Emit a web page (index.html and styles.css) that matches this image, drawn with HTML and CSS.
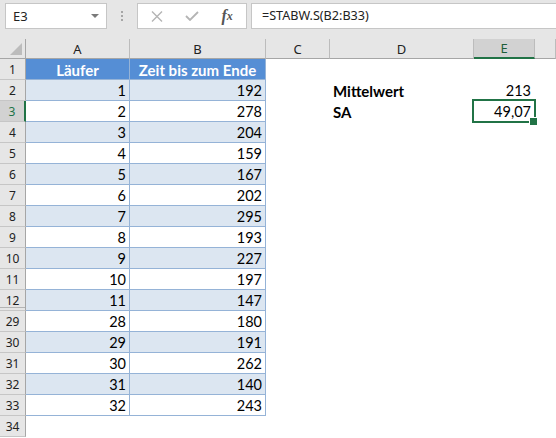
FILE: index.html
```html
<!DOCTYPE html>
<html lang="de">
<head>
<meta charset="utf-8">
<title>STABW.S</title>
<link rel="stylesheet" href="styles.css">
</head>
<body>
<div class="toolbar">
  <div class="namebox"><span class="name">E3</span><span class="caret"></span></div>
  <div class="grip"><i></i><i></i><i></i></div>
  <div class="fbuttons">
    <span class="fbtn"><svg width="12" height="11" viewBox="0 0 12 11"><path d="M1 0.5 L11 10.5 M11 0.5 L1 10.5" stroke="#b4b4b4" stroke-width="1.4" fill="none"/></svg></span>
    <span class="fbtn"><svg width="14" height="10" viewBox="0 0 14 10"><path d="M1 5 L5 9 L13 1" stroke="#b4b4b4" stroke-width="1.8" fill="none"/></svg></span>
    <span class="fbtn fx"><i>f</i><i class="x">x</i></span>
  </div>
  <div class="formula">=STABW.S(B2:B33)</div>
</div>
<div class="sheet">
  <div class="corner"><svg width="12" height="12" viewBox="0 0 12 12"><path d="M12 0 L12 12 L0 12 Z" fill="#bcbcbc"/></svg></div>
  <div class="ch">A</div><div class="ch">B</div><div class="ch">C</div><div class="ch">D</div><div class="ch sel">E</div><div class="ch"></div>

  <div class="rh">1</div><div class="t th">Läufer</div><div class="t th">Zeit bis zum Ende</div><div></div><div></div><div></div><div></div>
  <div class="rh">2</div><div class="t band">1</div><div class="t band">192</div><div></div><div class="c b">Mittelwert</div><div class="c r">213</div><div></div>
  <div class="rh rsel">3</div><div class="t">2</div><div class="t">278</div><div></div><div class="c b">SA</div><div class="c r active">49,07</div><div></div>
  <div class="rh">4</div><div class="t band">3</div><div class="t band">204</div><div></div><div></div><div></div><div></div>
  <div class="rh">5</div><div class="t">4</div><div class="t">159</div><div></div><div></div><div></div><div></div>
  <div class="rh">6</div><div class="t band">5</div><div class="t band">167</div><div></div><div></div><div></div><div></div>
  <div class="rh">7</div><div class="t">6</div><div class="t">202</div><div></div><div></div><div></div><div></div>
  <div class="rh">8</div><div class="t band">7</div><div class="t band">295</div><div></div><div></div><div></div><div></div>
  <div class="rh">9</div><div class="t">8</div><div class="t">193</div><div></div><div></div><div></div><div></div>
  <div class="rh">10</div><div class="t band">9</div><div class="t band">227</div><div></div><div></div><div></div><div></div>
  <div class="rh">11</div><div class="t">10</div><div class="t">197</div><div></div><div></div><div></div><div></div>
  <div class="rh hid">12</div><div class="t band">11</div><div class="t band">147</div><div></div><div></div><div></div><div></div>
  <div class="rh">29</div><div class="t">28</div><div class="t">180</div><div></div><div></div><div></div><div></div>
  <div class="rh">30</div><div class="t band">29</div><div class="t band">191</div><div></div><div></div><div></div><div></div>
  <div class="rh">31</div><div class="t">30</div><div class="t">262</div><div></div><div></div><div></div><div></div>
  <div class="rh">32</div><div class="t band">31</div><div class="t band">140</div><div></div><div></div><div></div><div></div>
  <div class="rh">33</div><div class="t">32</div><div class="t">243</div><div></div><div></div><div></div><div></div>
  <div class="rh">34</div><div></div><div></div><div></div><div></div><div></div><div></div>
</div>
</body>
</html>
```
FILE: styles.css
```css
* { box-sizing: border-box; }
html, body { margin: 0; padding: 0; }
body {
  width: 556px;
  height: 438px;
  overflow: hidden;
  background: #ffffff;
  font-family: Lato, "Liberation Sans", sans-serif;
  color: #000;
}

/* ---------- formula bar ---------- */
.toolbar {
  display: flex;
  align-items: flex-start;
  height: 39px;
  padding-top: 3px;
  background: #e6e6e6;
  font-family: "Noto Sans", "Open Sans", sans-serif;
}
.namebox {
  margin-left: 5px;
  width: 102px;
  height: 26px;
  background: #fff;
  border: 1px solid #c6c6c6;
  display: flex;
  align-items: center;
  justify-content: space-between;
  padding: 0 7px 0 7px;
}
.name { font-size: 13px; color: #222; }
.caret {
  width: 0; height: 0;
  border-left: 4px solid transparent;
  border-right: 4px solid transparent;
  border-top: 4px solid #7a7a7a;
}
.grip {
  width: 30px;
  height: 26px;
  display: flex;
  flex-direction: column;
  align-items: center;
  justify-content: center;
  gap: 2px;
}
.grip i { display: block; width: 2px; height: 2px; background: #a6a6a6; }
.fbuttons {
  width: 110px;
  height: 26px;
  background: #fff;
  border: 1px solid #c6c6c6;
  display: flex;
  align-items: center;
  padding-left: 1px;
}
.fbtn {
  width: 36px;
  display: flex;
  justify-content: center;
  align-items: center;
}
.fx {
  font-family: "Liberation Serif", "DejaVu Serif", serif;
  font-style: italic;
  font-size: 16px;
  color: #555;
  padding-right: 2px;
}
.fx i { font-style: italic; font-weight: bold; }
.fx .x { font-size: 12px; font-weight: bold; margin-left: 0; }
.formula {
  flex: 1;
  margin-left: 4px;
  height: 26px;
  background: #fff;
  border: 1px solid #c6c6c6;
  border-right: none;
  padding-left: 10px;
  font-size: 12.6px;
  line-height: 24px;
  color: #222;
}

/* ---------- grid ---------- */
.sheet {
  display: grid;
  grid-template-columns: 26px 104px 136px 64px 144px 61px 1fr;
  grid-template-rows: 20px;
  grid-auto-rows: 21px;
}
.corner {
  background: #e6e6e6;
  border-right: 1px solid #a6a6a6;
  border-bottom: 1px solid #a6a6a6;
  display: flex;
  align-items: flex-end;
  justify-content: flex-end;
  padding: 0 3px 3px 0;
}
.ch {
  background: #e6e6e6;
  border-right: 1px solid #bcbcbc;
  border-bottom: 1px solid #a6a6a6;
  font-family: "Noto Sans", "Open Sans", sans-serif;
  font-size: 13px;
  color: #222;
  display: flex;
  align-items: center;
  justify-content: center;
}
.ch.sel {
  background: #d2d2d2;
  border-bottom: 2px solid #217346;
  color: #1d5e3a;
}
.rh {
  background: #e6e6e6;
  border-right: 1px solid #a6a6a6;
  border-bottom: 1px solid #c6c6c6;
  font-family: "Noto Sans", "Open Sans", sans-serif;
  font-size: 12px;
  color: #222;
  display: flex;
  align-items: center;
  justify-content: center;
  padding-top: 1px;
}
.rh.rsel {
  background: #d2d2d2;
  border-right: 2px solid #217346;
  color: #217346;
}
.rh.hid {
  box-shadow: inset 0 -2px 0 #e6e6e6, inset 0 -3px 0 #b4b4b4;
}

.t, .c {
  font-size: 14.5px;
  line-height: 20px;
  padding-top: 1px;
  white-space: nowrap;
}
.t {
  border-right: 1px solid #95b3d7;
  border-bottom: 1px solid #95b3d7;
  text-align: right;
  padding-right: 3px;
}
.t.band { background: #dce6f1; }
.t.th {
  background: #558ed5;
  color: #fff;
  font-weight: bold;
  font-size: 15px;
  text-align: center;
  padding-right: 0;
}
.c { padding-left: 3px; padding-right: 4px; }
.b { font-weight: bold; font-size: 15px; }
.r { text-align: right; }
.active { position: relative; }
.active::after {
  content: "";
  position: absolute;
  left: -2px; top: -2px; right: -1px; bottom: -1px;
  border: 2px solid #217346;
}
.active::before {
  content: "";
  position: absolute;
  right: -3px; bottom: -4px;
  width: 7px; height: 7px;
  background: #217346;
  border: 1px solid #fff;
  z-index: 1;
}
```
